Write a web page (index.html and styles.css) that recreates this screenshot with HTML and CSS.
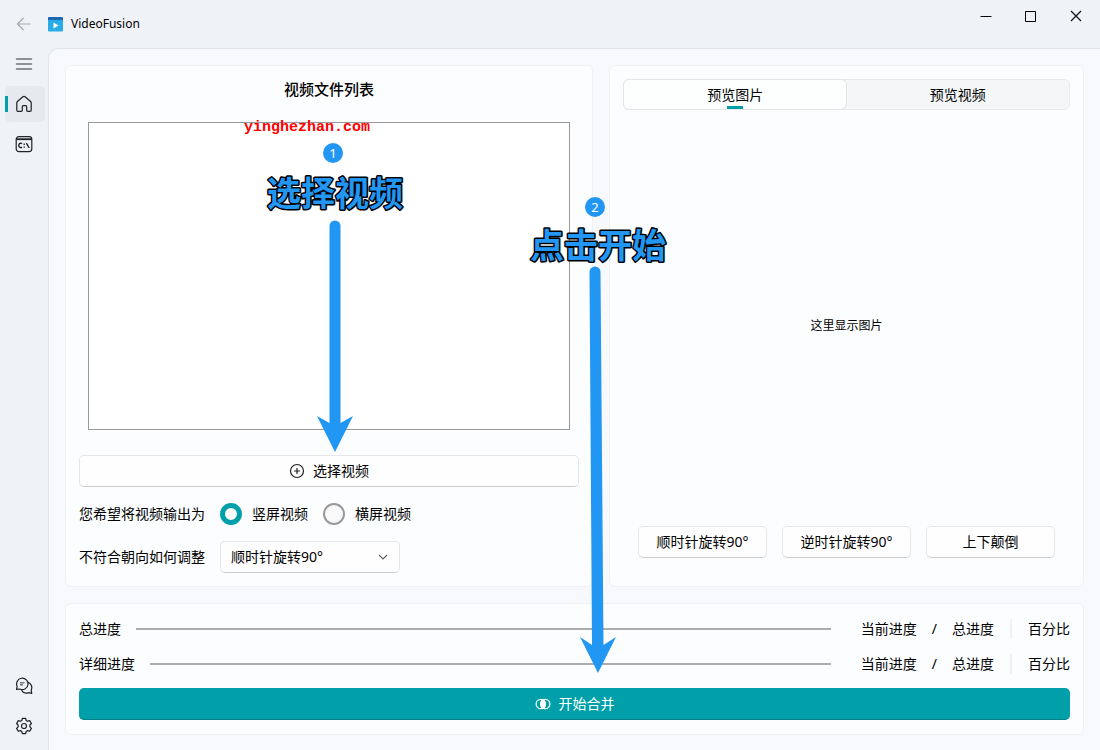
FILE: index.html
```html
<!DOCTYPE html>
<html lang="zh-CN">
<head>
<meta charset="utf-8">
<title>VideoFusion</title>
<link rel="stylesheet" href="styles.css">
</head>
<body>
<div class="window">
  <nav class="sidebar" aria-label="导航">
    <button class="nav-item" type="button" aria-label="返回" disabled>
      <svg width="18" height="18" viewBox="0 0 18 18" fill="none" stroke="#a3a6aa" stroke-width="1.2"><path d="M15.5 9H3M8.5 3L2.5 9l6 6"/></svg>
    </button>
    <button class="nav-item" type="button" aria-label="菜单">
      <svg width="18" height="18" viewBox="0 0 18 18" fill="none" stroke="#707276" stroke-width="1.5" stroke-linecap="round"><path d="M1.5 4h15M1.5 9h15M1.5 14h15"/></svg>
    </button>
    <button class="nav-item nav-item-active" type="button" aria-label="主页">
      <svg width="18" height="18" viewBox="0 0 18 18" fill="none" stroke="#202124" stroke-width="1.2" stroke-linejoin="round"><path d="M1.8 7.8c0-.5.2-.9.6-1.3l5.5-4.7a1.6 1.6 0 0 1 2.2 0l5.5 4.7c.4.4.6.8.6 1.3v7.4c0 .8-.5 1.2-1.2 1.2h-2.2c-.7 0-1.1-.4-1.1-1.1v-3.5c0-.7-.4-1.1-1.1-1.1H8.4c-.7 0-1.1.4-1.1 1.1v3.5c0 .7-.4 1.1-1.1 1.1H3c-.7 0-1.2-.4-1.2-1.2z"/></svg>
    </button>
    <button class="nav-item" type="button" aria-label="命令行">
      <svg width="18" height="18" viewBox="0 0 18 18" fill="none" stroke="#202124" stroke-width="1.2"><rect x="1.2" y="1.6" width="15.6" height="15" rx="2.8"/><path d="M1.5 4.2h15" stroke-width="1.8"/><path d="M7 8.7c-1.300-1.100-3.200-.3-3.200 1.700s1.900 2.800 3.200 1.700M11.400 8.100l2.800 4.900" stroke-width="1.400"/><path d="M9.200 8.600v1.300M9.200 11.400v1.300" stroke-width="1.300"/></svg>
    </button>
    <span class="nav-space"></span>
    <button class="nav-item" type="button" aria-label="反馈">
      <svg width="18" height="18" viewBox="0 0 18 18" fill="none" stroke="#202124" stroke-width="1.2" stroke-linejoin="round"><path d="M1.500 12.400l.7-3A5.700 5.700 0 1 1 4.800 12zM13.200 5.200a5.700 5.700 0 0 1 2.900 8l.7 3.200-3-.8a6 6 0 0 1-7.300-2.300"/><path d="M5 5.700h4.500M5 7.800h3" stroke="#74777a" stroke-width="1.500"/></svg>
    </button>
    <button class="nav-item" type="button" aria-label="设置">
      <svg width="18" height="18" viewBox="0 0 18 18" fill="none" stroke="#202124" stroke-width="1.2" stroke-linejoin="round"><path d="M7.300 1.400h3.400l.5 2.100 1.300.8 2.200-.7 1.700 2.900L14.900 8v1.900l1.500 1.500-1.700 2.900-2.200-.7-1.300.8-.5 2.200H7.300l-.5-2.200-1.300-.8-2.200.7-1.700-2.900 1.500-1.500V8L1.600 6.500l1.700-2.900 2.200.7 1.300-.8z"/><circle cx="9" cy="9" r="2.500"/></svg>
    </button>
  </nav>

  <div class="main">
    <header class="titlebar">
      <svg class="logo" width="15" height="15" viewBox="0 0 15 15"><rect width="15" height="6" rx="1" fill="#1b67b0"/><path d="M0 3h15v10.500a1 1 0 0 1-1 1H1a1 1 0 0 1-1-1z" fill="#29abe8"/><path d="M5.500 5.500v6l5-3z" fill="#fff"/></svg>
      <h1 class="app-name">VideoFusion</h1>
      <div class="window-controls">
        <button class="window-button" type="button" aria-label="最小化"><svg width="12" height="12" viewBox="0 0 12 12" stroke="#000"><path d="M.5 6.500h11"/></svg></button>
        <button class="window-button" type="button" aria-label="最大化"><svg width="12" height="12" viewBox="0 0 12 12" fill="none" stroke="#000"><path d="M.5 1.500h10v10H.5z"/></svg></button>
        <button class="window-button" type="button" aria-label="关闭"><svg width="12" height="12" viewBox="0 0 12 12" stroke="#111" stroke-width="1.200"><path d="M1 1l10 10M11 1L1 11"/></svg></button>
      </div>
    </header>

    <main class="content">
      <section class="card files">
        <h2 class="files-title">视频文件列表</h2>
        <div class="file-list"></div>
        <button class="button" type="button">
          <svg width="16" height="16" viewBox="0 0 16 16" fill="none" stroke="#222" stroke-width="1.200"><circle cx="8" cy="8" r="6.500"/><path d="M8 5v6M5 8h6"/></svg>
          选择视频
        </button>
        <div class="option-row" role="radiogroup" aria-labelledby="output-label">
          <span id="output-label">您希望将视频输出为</span>
          <label class="choice"><input class="radio" type="radio" name="output" checked>竖屏视频</label>
          <label class="choice"><input class="radio" type="radio" name="output">横屏视频</label>
        </div>
        <div class="option-row">
          <label for="rotate">不符合朝向如何调整</label>
          <span class="select-wrap">
            <select class="select" id="rotate"><option>顺时针旋转90°</option><option>逆时针旋转90°</option><option>上下颠倒</option></select>
            <svg class="chevron" width="10" height="10" viewBox="0 0 10 10" fill="none" stroke="#606060" stroke-width="1.100"><path d="M1 3l4 4 4-4"/></svg>
          </span>
        </div>
      </section>

      <section class="card preview">
        <div class="tabs" role="tablist">
          <button class="tab tab-active" type="button" role="tab" aria-selected="true">预览图片</button>
          <button class="tab" type="button" role="tab" aria-selected="false">预览视频</button>
        </div>
        <p class="preview-empty">这里显示图片</p>
        <div class="preview-actions">
          <button class="button" type="button">顺时针旋转90°</button>
          <button class="button" type="button">逆时针旋转90°</button>
          <button class="button" type="button">上下颠倒</button>
        </div>
      </section>

      <section class="card progress">
        <div class="progress-row">
          <span>总进度</span><span class="track"></span>
          <span>当前进度</span><span>/</span><span>总进度</span><span class="divider"></span><span>百分比</span>
        </div>
        <div class="progress-row">
          <span>详细进度</span><span class="track"></span>
          <span>当前进度</span><span>/</span><span>总进度</span><span class="divider"></span><span>百分比</span>
        </div>
        <button class="button button-primary" type="button">
          <svg width="16" height="16" viewBox="0 0 16 16" fill="none" stroke="#fff" stroke-width="1.200"><circle cx="5.800" cy="8" r="4.700"/><circle cx="10.200" cy="8" r="4.700"/><path d="M8 3.900a4.700 4.700 0 0 1 0 8.200 4.700 4.700 0 0 1 0-8.200z" fill="#fff"/></svg>
          开始合并
        </button>
      </section>
    </main>
  </div>

  <svg class="notes" width="1100" height="750" viewBox="0 0 1100 750">
    <text class="note-site" x="307" y="131">yinghezhan.com</text>
    <g class="note-shape">
      <circle cx="333" cy="153" r="10"/>
      <path d="M329.500 226a5.500 5.500 0 0 1 11 0v197l12.500-7-18 36-18-36 12.500 7z"/>
      <circle cx="595" cy="207" r="10"/>
      <path d="M589.500 272a5.500 5.500 0 0 1 11 0l3 373 12.500-8-18 36-18-36 12 8z"/>
    </g>
    <text class="note-number" x="333" y="158">1</text>
    <text class="note-number" x="595" y="212">2</text>
    <text class="note-title" x="335" y="206">选择视频</text>
    <text class="note-title" x="598" y="258">点击开始</text>
  </svg>
</div>
</body>
</html>
```
FILE: styles.css
```css
* { box-sizing: border-box; }

body {
  margin: 0;
  font: 14px/20px "Noto Sans", "Noto Sans CJK SC", sans-serif;
  color: #000;
  background: #eff3f8;
}

button, select { font: inherit; color: inherit; }
svg { display: block; flex: none; }

.window {
  position: relative;
  display: flex;
  min-height: 100vh;
}

.sidebar {
  display: flex;
  flex-direction: column;
  gap: 4px;
  width: 48px;
  padding: 6px 3px 6px 5px;
}

.nav-item {
  display: flex;
  align-items: center;
  height: 36px;
  padding: 0 0 0 10px;
  border: 0;
  border-radius: 5px;
  background: transparent;
}

.nav-item-active {
  background: linear-gradient(#009faa, #009faa) 0 50% / 3px 16px no-repeat #e6e9ee;
}

.nav-space { flex: 1; }

.main {
  flex: 1;
  display: flex;
  flex-direction: column;
  min-width: 0;
}

.titlebar {
  display: flex;
  align-items: center;
  gap: 8px;
  height: 48px;
}

.app-name {
  flex: 1;
  margin: 0;
  font-size: 12px;
  font-weight: 400;
}

.window-controls {
  display: flex;
  align-self: flex-start;
  padding-right: 2px;
}

.window-button {
  display: grid;
  place-items: center;
  width: 45px;
  height: 32px;
  padding: 0;
  border: 0;
  background: transparent;
}

.content {
  flex: 1;
  display: grid;
  grid-template-columns: 10fr 9fr;
  grid-template-rows: 1fr auto;
  gap: 16px;
  padding: 16px 16px 15px;
  border: solid #e1e4e9;
  border-width: 1px 0 0 1px;
  border-top-left-radius: 10px;
  background: #f7f9fd;
}

.card {
  display: flex;
  flex-direction: column;
  gap: 14px;
  min-width: 0;
  padding: 13px;
  border: 1px solid #eff1f4;
  border-radius: 6px;
  background: #fcfdff;
}

.files-title {
  margin: 0;
  font-size: 15px;
  line-height: 20px;
  font-weight: 500;
  text-align: center;
}

.file-list {
  flex: 1;
  min-height: 120px;
  margin: 9px 9px 11px;
  border: 1px solid #989898;
  background: #fff;
}

.button {
  display: flex;
  align-items: center;
  justify-content: center;
  gap: 8px;
  height: 32px;
  padding: 0 10px;
  border: 1px solid #e5e6e8;
  border-bottom-color: #cbccce;
  border-radius: 5px;
  background: #fefefe;
}

.option-row {
  display: flex;
  align-items: center;
  gap: 15px;
  min-height: 26px;
}

.choice {
  display: flex;
  align-items: center;
  gap: 10px;
}

.radio {
  appearance: none;
  width: 22px;
  height: 22px;
  margin: 0;
  border: 2px solid #999;
  border-radius: 50%;
  background: #f9f9fa;
}

.radio:checked {
  border: 5px solid #009faa;
  background: #fff;
}

.select-wrap {
  display: grid;
  align-items: center;
  width: 180px;
}

.select {
  grid-area: 1 / 1;
  appearance: none;
  width: 100%;
  height: 32px;
  padding: 0 30px 0 10px;
  border: 1px solid #e5e6e8;
  border-bottom-color: #cbccce;
  border-radius: 5px;
  background: #fefefe;
}

.chevron {
  grid-area: 1 / 1;
  justify-self: end;
  margin-right: 12px;
  pointer-events: none;
}

.tabs {
  display: flex;
  height: 31px;
  border: 1px solid #e7e9eb;
  border-radius: 6px;
  background: #f4f6f8;
}

.tab {
  flex: 1;
  padding: 0;
  border: 0;
  border-radius: 5px;
  background: transparent;
}

.tab-active {
  background: linear-gradient(#009faa, #009faa) 50% 100% / 16px 3px no-repeat #fcfffe;
  box-shadow: 0 0 0 1px #e3e5e7;
}

.preview-empty {
  flex: 1;
  display: grid;
  place-items: center;
  margin: 0;
  padding-top: 16px;
  font-size: 12px;
}

.preview-actions {
  display: grid;
  grid-template-columns: repeat(3, 1fr);
  gap: 15px;
  padding: 0 15px 15px;
}

.progress {
  grid-column: 1 / -1;
  padding: 14px 13px;
}

.progress-row {
  display: flex;
  align-items: center;
  gap: 15px;
  height: 21px;
}

.track {
  flex: 1;
  height: 2px;
  margin-right: 15px;
  background: #acacac;
}

.divider {
  width: 2px;
  height: 20px;
  margin: 0 1px;
  background: #f0f1f3;
}

.button-primary {
  border: 0;
  border-bottom: 1px solid #00808a;
  background: #009faa;
  color: #fff;
}

.notes {
  position: absolute;
  top: 0;
  left: 0;
  pointer-events: none;
  text-anchor: middle;
}

.note-shape { fill: #2196f3; }

.note-site {
  font: bold 15px "Liberation Mono", monospace;
  fill: #f00;
}

.note-number {
  font: 13px "Noto Sans", sans-serif;
  fill: #fff;
}

.note-title {
  font: bold 34px "Noto Sans CJK SC", sans-serif;
  fill: #2196f3;
  stroke: #000;
  stroke-width: 3px;
  stroke-linejoin: round;
  paint-order: stroke;
}
```
